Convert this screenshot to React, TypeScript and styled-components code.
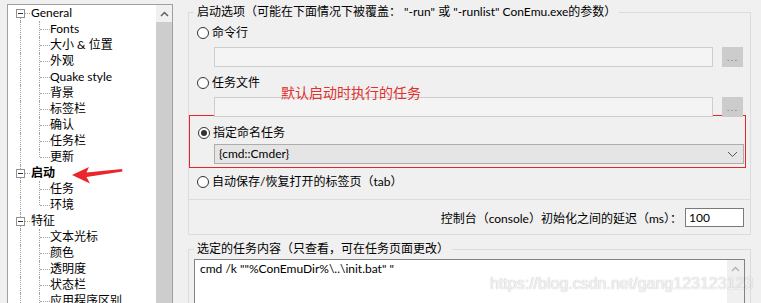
import styled, { createGlobalStyle } from "styled-components";

const GlobalStyle = createGlobalStyle`
  html, body {
    margin: 0;
    padding: 0;
  }
  body {
    width: 761px;
    height: 303px;
    overflow: hidden;
    background: #f0f0f0;
    font-family: "Lato", "Noto Sans CJK SC", sans-serif;
    font-size: 12px;
    color: #000;
  }
`;

type Line = "full" | "top" | "bottom" | "none";

interface TreeNode {
  label: string;
  bold?: boolean;
  children: string[];
  openEnd?: boolean;
}

const tree: TreeNode[] = [
  {
    label: "General",
    children: ["Fonts", "大小 & 位置", "外观", "Quake style", "背景", "标签栏", "确认", "任务栏", "更新"],
  },
  { label: "启动", bold: true, children: ["任务", "环境"] },
  { label: "特征", children: ["文本光标", "颜色", "透明度", "状态栏", "应用程序区别"], openEnd: true },
];

export default function App() {
  return (
    <Page>
      <GlobalStyle />
      <Tree>
        <TreeList>
          {tree.map((node, i) => (
            <div key={node.label}>
              <TreeRow>
                <Guide $w={23} $x={12} $line={i === 0 ? "bottom" : "full"} $branch={9} $bx={13}>
                  <Expander />
                </Guide>
                <TreeLabel $bold={node.bold}>{node.label}</TreeLabel>
              </TreeRow>
              {node.children.map((c, j) => {
                const last = j === node.children.length - 1 && !node.openEnd;
                return (
                  <TreeRow key={c}>
                    <Guide $w={23} $x={12} $line="full" />
                    <Guide $w={19} $x={8} $line={last ? "top" : "full"} $branch={10} $bx={9} />
                    <TreeLabel>{c}</TreeLabel>
                  </TreeRow>
                );
              })}
            </div>
          ))}
        </TreeList>
        <ScrollBar>
          <ScrollArrow>
            <svg width="9" height="6" viewBox="0 0 9 6">
              <path d="M1 5 L4.5 1.5 L8 5" fill="none" stroke="#606060" strokeWidth="1.5" />
            </svg>
          </ScrollArrow>
          <Thumb />
        </ScrollBar>
      </Tree>

      <RightPane>
        <GroupBox>
          <Legend>启动选项（可能在下面情况下被覆盖： "-run" 或 "-runlist" ConEmu.exe的参数）</Legend>
          <RadioRow $mt={5}>
            <Radio />
            <span>命令行</span>
          </RadioRow>
          <FieldRow>
            <TextInput />
            <BrowseButton>...</BrowseButton>
          </FieldRow>
          <RadioRow $mt={8}>
            <Radio />
            <span>任务文件</span>
          </RadioRow>
          <FieldRow>
            <TextInput />
            <BrowseButton>...</BrowseButton>
          </FieldRow>
          <Highlight>
            <RadioRow>
              <Radio $checked />
              <span>指定命名任务</span>
            </RadioRow>
            <Select>
              <span>{"{cmd::Cmder}"}</span>
              <svg width="11" height="7" viewBox="0 0 11 7">
                <path d="M1 1 L5.5 5.5 L10 1" fill="none" stroke="#555" strokeWidth="1" />
              </svg>
            </Select>
          </Highlight>
          <RadioRow $mt={6}>
            <Radio />
            <span>自动保存/恢复打开的标签页（tab）</span>
          </RadioRow>
        </GroupBox>

        <DelayBox>
          <span>控制台（console）初始化之间的延迟（ms）：</span>
          <DelayInput>100</DelayInput>
        </DelayBox>

        <ContentGroup>
          <Legend>选定的任务内容（只查看，可在任务页面更改）</Legend>
          <TaskText>
            <TaskLine>{'cmd /k ""%ConEmuDir%\\..\\init.bat" "'}</TaskLine>
            <TaskScroll>
              <svg width="9" height="6" viewBox="0 0 9 6">
                <path d="M1 5 L4.5 1.5 L8 5" fill="none" stroke="#b0b0b0" strokeWidth="1.3" />
              </svg>
            </TaskScroll>
          </TaskText>
        </ContentGroup>
      </RightPane>

      <Annotation>默认启动时执行的任务</Annotation>
      <Arrow width="60" height="22" viewBox="0 0 60 22">
        <path d="M4 11 L21 3 L18.5 8.5 L54 5 L54.5 7.5 L18.5 13 L22 19.5 Z" fill="#e8262b" />
      </Arrow>
      <Watermark>https://blog.csdn.net/gang123123123</Watermark>
    </Page>
  );
}

const Page = styled.div`
  position: relative;
  display: flex;
  align-items: flex-start;
  box-sizing: border-box;
  width: 761px;
  height: 303px;
  padding: 4px 0 0 7px;
  overflow: hidden;
`;

const Tree = styled.div`
  flex: 0 0 166px;
  box-sizing: border-box;
  height: 330px;
  display: flex;
  background: #fff;
  border: 1px solid #a0a0a0;
`;

const TreeList = styled.div`
  flex: 1;
  overflow: hidden;
`;

const TreeRow = styled.div`
  display: flex;
  align-items: center;
  height: 16px;
  white-space: nowrap;
`;

const Guide = styled.span<{ $w: number; $x: number; $line: Line; $branch?: number; $bx?: number }>`
  position: relative;
  flex: 0 0 ${(p) => p.$w}px;
  align-self: stretch;

  &::before {
    content: "";
    position: absolute;
    left: ${(p) => p.$x}px;
    top: ${(p) => (p.$line === "bottom" ? "8px" : "0")};
    bottom: ${(p) => (p.$line === "top" ? "8px" : "0")};
    border-left: 1px dotted #a0a0a0;
    display: ${(p) => (p.$line === "none" ? "none" : "block")};
  }

  &::after {
    content: "";
    position: absolute;
    left: ${(p) => p.$bx ?? 0}px;
    top: 8px;
    width: ${(p) => p.$branch ?? 0}px;
    border-top: 1px dotted #a0a0a0;
    display: ${(p) => (p.$branch ? "block" : "none")};
  }
`;

const Expander = styled.span`
  position: absolute;
  z-index: 1;
  left: 8px;
  top: 4px;
  width: 7px;
  height: 7px;
  border: 1px solid #919191;
  background: #fff;

  &::after {
    content: "";
    position: absolute;
    left: 1px;
    top: 3px;
    width: 5px;
    height: 1px;
    background: #333;
  }
`;

const TreeLabel = styled.span<{ $bold?: boolean }>`
  font-size: 12px;
  line-height: 16px;
  font-weight: ${(p) => (p.$bold ? 700 : 400)};
`;

const ScrollBar = styled.div`
  flex: 0 0 16px;
  display: flex;
  flex-direction: column;
  background: #f0f0f0;
`;

const ScrollArrow = styled.div`
  height: 17px;
  display: flex;
  align-items: center;
  justify-content: center;
`;

const Thumb = styled.div`
  flex: 1;
  background: #cdcdcd;
`;

const RightPane = styled.div`
  flex: 1;
  padding: 0 10px 0 15px;
  display: flex;
  flex-direction: column;
`;

const GroupBox = styled.fieldset`
  margin: 0;
  padding: 0 3px 9px 0;
  min-width: 0;
  border: 1px solid #dcdcdc;
`;

const Legend = styled.legend`
  margin-left: 5px;
  padding: 0 3px;
  font-size: 12px;
  line-height: 16px;
  white-space: nowrap;
`;

const RadioRow = styled.div<{ $mt?: number }>`
  display: flex;
  align-items: center;
  gap: 3px;
  height: 16px;
  margin-top: ${(p) => p.$mt ?? 0}px;
  padding-left: 8px;
  line-height: 16px;
  white-space: nowrap;
`;

const Radio = styled.span<{ $checked?: boolean }>`
  position: relative;
  box-sizing: border-box;
  width: 12px;
  height: 12px;
  border-radius: 50%;
  border: 1px solid #333;
  background: #fff;

  &::after {
    content: "";
    position: absolute;
    left: 2px;
    top: 2px;
    width: 6px;
    height: 6px;
    border-radius: 50%;
    background: #333;
    display: ${(p) => (p.$checked ? "block" : "none")};
  }
`;

const FieldRow = styled.div`
  display: flex;
  gap: 9px;
  height: 20px;
  margin-top: 6px;
  padding: 0 4px 0 25px;
`;

const TextInput = styled.div`
  flex: 1;
  box-sizing: border-box;
  border: 1px solid #cdcdcd;
  background: #f4f4f4;
`;

const BrowseButton = styled.div`
  flex: 0 0 21px;
  display: flex;
  align-items: center;
  justify-content: center;
  background: #cccccc;
  color: #7a7a7a;
  font-family: "Liberation Sans", sans-serif;
  font-size: 10px;
  letter-spacing: 1px;
`;

const Highlight = styled.div`
  margin: -2px 1px 0 0;
  padding: 9px 0 3px 0;
  border: 1px solid #e3262c;
`;

const Select = styled.div`
  display: flex;
  align-items: center;
  justify-content: space-between;
  box-sizing: border-box;
  height: 20px;
  margin: 3px 1px 0 24px;
  padding: 0 5px 0 4px;
  border: 1px solid #adadad;
  background: #e5e5e5;
  line-height: 18px;
`;

const DelayBox = styled.div`
  display: flex;
  align-items: center;
  justify-content: flex-end;
  gap: 3px;
  height: 34px;
  padding-right: 6px;
  border: 1px solid #dcdcdc;
  border-top: none;
  white-space: nowrap;
`;

const DelayInput = styled.div`
  box-sizing: border-box;
  width: 59px;
  height: 19px;
  padding-left: 3px;
  border: 1px solid #7a7a7a;
  background: #fff;
  line-height: 17px;
`;

const ContentGroup = styled.fieldset`
  margin: 6px 0 0 0;
  padding: 0;
  min-width: 0;
  border: 1px solid #dcdcdc;
`;

const TaskText = styled.div`
  display: flex;
  height: 70px;
  margin: 2px 5px 0 5px;
  border: 1px solid #828282;
  background: #fff;
`;

const TaskLine = styled.div`
  flex: 1;
  padding: 1px 0 0 5px;
  line-height: 16px;
  white-space: nowrap;
`;

const TaskScroll = styled.div`
  flex: 0 0 17px;
  display: flex;
  justify-content: center;
  padding-top: 6px;
  background: #f0f0f0;
`;

const Annotation = styled.div`
  position: absolute;
  left: 281px;
  top: 82px;
  font-family: "Noto Sans CJK SC", sans-serif;
  font-size: 14px;
  line-height: 20px;
  color: #e0302f;
  white-space: nowrap;
`;

const Arrow = styled.svg`
  position: absolute;
  left: 68px;
  top: 164px;
`;

const Watermark = styled.div`
  position: absolute;
  left: 490px;
  top: 273px;
  font-family: "Liberation Sans", sans-serif;
  font-size: 16px;
  line-height: 22px;
  color: rgba(255, 255, 255, 0.85);
  text-shadow: 0 0 1px rgba(0, 0, 0, 0.35);
  white-space: nowrap;
`;
